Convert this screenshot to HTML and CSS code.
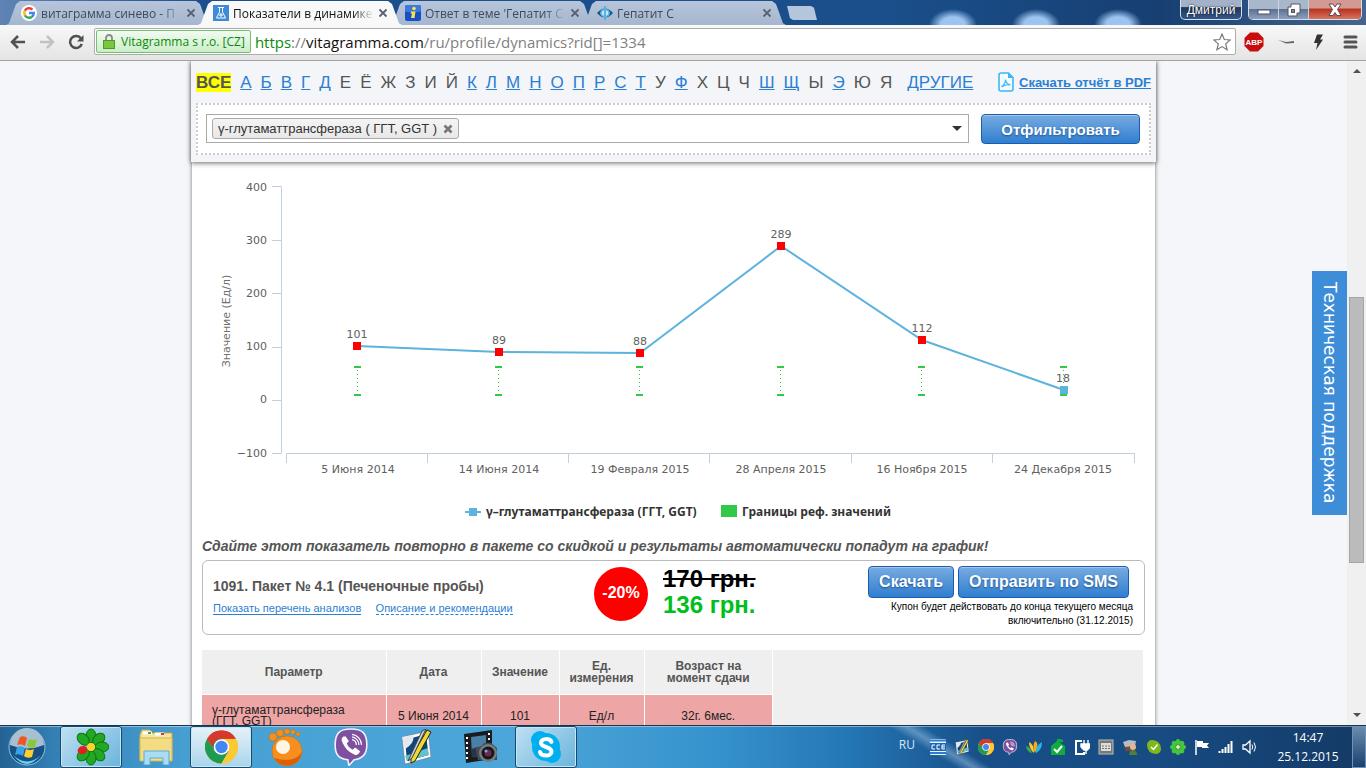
FILE: index.html
```html
<!DOCTYPE html>
<html lang="ru">
<head>
    <meta charset="UTF-8">
    <meta name="viewport" content="width=device-width, initial-scale=1.0">
    <title>Показатели в динамике</title>
    <link rel="stylesheet" href="styles.css">
</head>
<body>
    <svg class="sprite" width="0" height="0" aria-hidden="true">
        <symbol id="chrome" viewBox="0 0 32 32">
            <circle cx="16" cy="16" r="16" fill="#fcc934"/>
            <path d="M16 16 L2.1 8 A16 16 0 0 1 29.9 8 L16 8 Z" fill="#d7382d"/>
            <path d="M2.1 8 A16 16 0 0 0 16 32 L23 20 L9 20 Z" fill="#1e9b50"/>
            <path d="M29.9 8 A16 16 0 0 1 16 32 L23 20 L22 8 Z" fill="#fcc934"/>
            <path d="M2.1 8 L9 20 L16 8 Z" fill="#1e9b50"/>
            <path d="M2.1 8 A16 16 0 0 1 29.9 8 L16 8 A8 8 0 0 0 9 12 L7 16 Z" fill="#d7382d"/>
            <circle cx="16" cy="16" r="7.5" fill="#fff"/>
            <circle cx="16" cy="16" r="6" fill="#4285f4"/>
        </symbol>
        <symbol id="viber" viewBox="0 0 32 36">
            <path d="M16 1 C27 1 31 5 31 16 C31 25 27 29 19 30 L14 35.500 L13 30 C4 29 1 25 1 16 C1 5 5 1 16 1 Z" fill="#7d51a0" stroke="#f4effa" stroke-width="1.500"/>
            <path d="M9 8 C7 9 6.500 11 8 14 C11 20 14 23 20 25.500 C22 26 24 24 24.500 22 L20 18.500 L17.500 20.500 C14.500 19 13 17.500 12 14.500 L14 12.500 L11 8 Z" fill="#fff"/>
            <path d="M17 11 A5 5 0 0 1 21 16 M17 8.500 A8 8 0 0 1 23.500 16 M17 6 A10.500 10.500 0 0 1 26 16" fill="none" stroke="#fff" stroke-width="1.200"/>
        </symbol>
        <symbol id="pen" viewBox="0 0 32 36">
            <path d="M2 8 L28 2 L31 28 L5 35 Z" fill="#fff" stroke="#667" stroke-width=".5"/>
            <path d="M5 11 L26 5 L28.500 26 L7 32 Z" fill="#10447f"/>
            <path d="M5 27 L28 19 L28.500 26 L7 32 Z" fill="#62c3c8"/>
            <path d="M2 8 L13 6 C15 12 10 17 5 20 Z" fill="#e3e8ec"/>
            <path d="M27 1 L31 3 L15 32 L11 34 L11 29 Z" fill="#f0d92c" stroke="#222"/>
            <path d="M22 2 L26 0 L12 29 L8 32 Z" fill="#c5cdd5" stroke="#444"/>
        </symbol>
        <symbol id="close" viewBox="0 0 10 10">
            <path d="M1.500 1.500 L8.500 8.500 M8.500 1.500 L1.500 8.500" stroke="currentColor" stroke-width="1.800"/>
        </symbol>
    </svg>

    <header class="tabstrip">
        <nav class="tabs">
            <a class="tab" href="#">
                <svg class="tab-icon" viewBox="0 0 16 16"><circle cx="8" cy="8" r="8" fill="#fff"/><g fill="none" stroke-width="2.400"><path d="M11.500 4.700 A4.800 4.800 0 0 0 3.800 5.800" stroke="#ea4335"/><path d="M3.800 5.800 A4.800 4.800 0 0 0 3.900 10.400" stroke="#fbbc05"/><path d="M3.900 10.400 A4.800 4.800 0 0 0 11 11.700" stroke="#34a853"/><path d="M11 11.700 A4.800 4.800 0 0 0 12.800 8 L8 8" stroke="#4285f4"/></g></svg>
                <span class="tab-title">витаграмма синево - П</span>
                <svg class="tab-close"><use href="#close"/></svg>
            </a>
            <a class="tab active" href="#">
                <svg class="tab-icon" viewBox="0 0 16 16"><rect width="16" height="16" fill="#3d8ad6"/><path d="M5 2.500 H11 M6.500 3 V7 L3.500 13 H12.500 L9.500 7 V3" fill="none" stroke="#fff"/><path d="M8 8 V12 M6 10 H10" stroke="#fff"/></svg>
                <span class="tab-title">Показатели в динамике</span>
                <svg class="tab-close"><use href="#close"/></svg>
            </a>
            <a class="tab" href="#">
                <svg class="tab-icon" viewBox="0 0 16 16"><rect width="16" height="16" rx="2" fill="#1650c4"/><rect width="16" height="7" rx="2" fill="#3b79dd"/><circle cx="9" cy="3.500" r="1.800" fill="#ffe14a"/><path d="M6 6.500 H10.500 L9.500 13 H6 L7 8.500 H5.500 Z" fill="#ffe14a"/></svg>
                <span class="tab-title">Ответ в теме 'Гепатит С</span>
                <svg class="tab-close"><use href="#close"/></svg>
            </a>
            <a class="tab" href="#">
                <svg class="tab-icon" viewBox="0 0 16 16"><path d="M0 8 Q8 -1 16 8 Q8 17 0 8 Z" fill="#1b5688"/><ellipse cx="8" cy="8" rx="4.500" ry="3.500" fill="#cfe6f5"/><path d="M8 1 V15" stroke="#54b4ea" stroke-width="2"/><ellipse cx="8" cy="8" rx="4" ry="3.500" fill="none" stroke="#54b4ea" stroke-width="1.500"/></svg>
                <span class="tab-title">Гепатит С</span>
                <svg class="tab-close"><use href="#close"/></svg>
            </a>
            <button class="new-tab" aria-label="Новая вкладка"></button>
        </nav>
        <div class="window-tools">
            <button class="user">Дмитрий</button>
            <div class="window-buttons">
                <button class="min" aria-label="Свернуть"><svg width="14" height="14" viewBox="0 0 14 14"><rect x="1" y="7" width="12" height="4" fill="#fff" stroke="#556"/></svg></button>
                <button class="restore" aria-label="Восстановить"><svg width="14" height="14" viewBox="0 0 14 14"><path d="M4 1 H13 V10 H10 V13 H1 V4 H4 Z" fill="#fff" stroke="#556"/><rect x="4.500" y="6.500" width="3" height="3" fill="#7189aa" stroke="#556"/></svg></button>
                <button class="quit" aria-label="Закрыть"><svg width="14" height="14" viewBox="0 0 14 14"><path d="M1 1 H5 L7 4 L9 1 H13 L9.500 6.500 L13 12.500 H9 L7 9.500 L5 12.500 H1 L4.500 6.500 Z" fill="#fff" stroke="#6a4650"/></svg></button>
            </div>
        </div>
    </header>

    <div class="toolbar">
        <button class="tool" aria-label="Назад"><svg width="16" height="14" viewBox="0 0 16 14"><path d="M15 7 H2 M8 1 L2 7 L8 13" fill="none" stroke="#505050" stroke-width="2.500"/></svg></button>
        <button class="tool" aria-label="Вперёд"><svg width="16" height="14" viewBox="0 0 16 14"><path d="M1 7 H14 M8 1 L14 7 L8 13" fill="none" stroke="#c2c2c2" stroke-width="2.500"/></svg></button>
        <button class="tool" aria-label="Обновить"><svg width="16" height="16" viewBox="0 0 16 16"><path d="M13 4.500 A6 6 0 1 0 13.800 10" fill="none" stroke="#505050" stroke-width="2.500"/><path d="M15.500 1 V7.500 H9 Z" fill="#505050"/></svg></button>
        <div class="omnibox">
            <span class="badge"><svg width="12" height="15" viewBox="0 0 12 15"><path d="M3 7 V4 A3 3 0 0 1 9 4 V7" fill="none" stroke="#8b8b8b" stroke-width="1.800"/><rect x=".5" y="6.500" width="11" height="8" fill="#7cc63f" stroke="#4c9e1d"/></svg>Vitagramma s r.o. [CZ]</span>
            <a class="url" href="#"><span class="scheme">https</span>://<span class="host">vitagramma.com</span>/ru/profile/dynamics?rid[]=1334</a>
            <svg width="18" height="18" viewBox="0 0 18 18"><path d="M9 1 L11.300 6.500 L17.200 7 L12.700 10.900 L14.100 16.700 L9 13.600 L3.900 16.700 L5.300 10.900 L.8 7 L6.700 6.500 Z" fill="#fff" stroke="#777" stroke-width="1.200"/></svg>
        </div>
        <div class="extensions">
            <svg width="20" height="20" viewBox="0 0 20 20"><path d="M6 .5 H14 L19.500 6 V14 L14 19.500 H6 L.5 14 V6 Z" fill="#c70d0d"/><text class="abp" x="10" y="13" text-anchor="middle">ABP</text></svg>
            <svg width="20" height="20" viewBox="0 0 20 20"><path d="M2 8 L10 10 L18 9 L18 11 L10 11.500 Z" fill="#666"/></svg>
            <svg width="20" height="20" viewBox="0 0 20 20"><path d="M9 2.500 L15 2.500 L12 7.500 L15 7.500 L8 18 L9.500 11 L6 11 Z" fill="#333"/></svg>
            <svg width="20" height="20" viewBox="0 0 20 20"><path d="M5 5 H16 M5 10 H16 M5 15 H16" stroke="#555" stroke-width="3" stroke-linecap="round"/></svg>
        </div>
    </div>

    <div class="viewport">
        <main class="page">
            <div class="column">
                <form class="filter">
                    <div class="filter-top">
                        <nav class="letters">
                            <b class="all">ВСЕ</b>
                            <a href="#">А</a><a href="#">Б</a><a href="#">В</a><a href="#">Г</a><a href="#">Д</a>
                            <span>Е</span><span>Ё</span><span>Ж</span><span>З</span><span>И</span><span>Й</span>
                            <a href="#">К</a><a href="#">Л</a><a href="#">М</a><a href="#">Н</a><a href="#">О</a><a href="#">П</a><a href="#">Р</a><a href="#">С</a><a href="#">Т</a>
                            <span>У</span><a href="#">Ф</a><span>Х</span><span>Ц</span><span>Ч</span>
                            <a href="#">Ш</a><a href="#">Щ</a><span>Ы</span><a href="#">Э</a><span>Ю</span><span>Я</span>
                            <a class="other" href="#">ДРУГИЕ</a>
                        </nav>
                        <div class="pdf">
                            <svg width="16" height="20" viewBox="0 0 16 20"><path d="M3 1 H10.500 L15 5.500 V17 Q15 19 13 19 H3 Q1 19 1 17 V3 Q1 1 3 1 Z" fill="#f2fbff" stroke="#3db7f5" stroke-width="1.600"/><path d="M10 1 V6 H15 Z" fill="#3db7f5"/><path d="M7.500 7.500 Q8 12 12.500 13 Q8 12 3.500 15 Q7.500 12 7.500 7.500" fill="none" stroke="#3db7f5" stroke-width="1.200"/></svg>
                            <a href="#">Скачать отчёт в PDF</a>
                        </div>
                    </div>
                    <div class="filter-box">
                        <div class="select">
                            <span class="tag">γ-глутаматтрансфераза ( ГГТ, GGT )
                                <button type="button" aria-label="Удалить"><svg width="10" height="10" viewBox="0 0 10 10"><path d="M1.500 1.500 L8.500 8.500 M8.500 1.500 L1.500 8.500" stroke="#777" stroke-width="2.600"/></svg></button>
                            </span>
                            <input type="text" aria-label="Показатель">
                            <button type="button" class="arrow" aria-label="Открыть список"></button>
                        </div>
                        <button type="button" class="btn btn-filter">Отфильтровать</button>
                    </div>
                </form>

                <div class="content">
                    <svg class="chart" viewBox="0 0 943 368" role="img" aria-label="График показателя">
                        <path class="axis" d="M70 24.500 H79.500 V291.500 H70 M70 78.500 H79 M70 131.500 H79 M70 185.500 H79 M70 238.500 H79"/>
                        <path class="axis" d="M84.500 301 V291.500 H932.500 V301 M225.500 291 V301 M366.500 291 V301 M507.500 291 V301 M649.500 291 V301 M790.500 291 V301"/>
                        <g class="label end">
                            <text x="65" y="29">400</text>
                            <text x="65" y="82">300</text>
                            <text x="65" y="135">200</text>
                            <text x="65" y="188">100</text>
                            <text x="65" y="241">0</text>
                            <text x="65" y="295">−100</text>
                        </g>
                        <text class="axis-title" transform="translate(28 159) rotate(-90)">Значение (Ед/л)</text>
                        <g class="label middle">
                            <text x="156" y="311">5 Июня 2014</text>
                            <text x="297" y="311">14 Июня 2014</text>
                            <text x="438" y="311">19 Февраля 2015</text>
                            <text x="579" y="311">28 Апреля 2015</text>
                            <text x="720" y="311">16 Ноября 2015</text>
                            <text x="861" y="311">24 Декабря 2015</text>
                        </g>
                        <g class="range">
                            <path d="M152 205 H159 M152 233 H159 M293 205 H300 M293 233 H300 M434 205 H441 M434 233 H441 M575 205 H582 M575 233 H582 M716 205 H723 M716 233 H723 M858 205 H865 M858 233 H865"/>
                            <path class="dots" d="M155.500 208 V232 M296.500 208 V232 M437.500 208 V232 M578.500 208 V232 M719.500 208 V232 M861.500 208 V232"/>
                        </g>
                        <polyline class="line" points="155,184 297,190 438,191 579,84 720,178 862,228"/>
                        <g fill="#f00">
                            <rect x="151" y="180" width="8" height="8"/>
                            <rect x="293" y="186" width="8" height="8"/>
                            <rect x="434" y="187" width="8" height="8"/>
                            <rect x="575" y="80" width="8" height="8"/>
                            <rect x="716" y="174" width="8" height="8"/>
                        </g>
                        <rect x="858" y="224" width="8" height="8" fill="#5cb3db"/>
                        <g class="label middle">
                            <text x="155" y="176">101</text>
                            <text x="297" y="182">89</text>
                            <text x="438" y="183">88</text>
                            <text x="579" y="76">289</text>
                            <text x="720" y="170">112</text>
                            <text x="861" y="220">18</text>
                        </g>
                        <path class="line" d="M263 350 H279"/>
                        <rect x="267" y="346" width="8" height="8" fill="#5cb3db"/>
                        <text class="legend" x="284" y="354">γ–глутаматтрансфераза (ГГТ, GGT)</text>
                        <rect x="519" y="343" width="16" height="12" fill="#32c84a"/>
                        <text class="legend" x="540" y="354">Границы реф. значений</text>
                    </svg>

                    <h2>Сдайте этот показатель повторно в пакете со скидкой и результаты автоматически попадут на график!</h2>

                    <section class="promo">
                        <div class="promo-info">
                            <h3>1091. Пакет № 4.1 (Печеночные пробы)</h3>
                            <a href="#">Показать перечень анализов</a>
                            <a class="dashed" href="#">Описание и рекомендации</a>
                        </div>
                        <div class="discount">-20%</div>
                        <div class="prices">
                            <del>170 грн.</del>
                            <strong>136 грн.</strong>
                        </div>
                        <div class="promo-actions">
                            <div class="promo-buttons">
                                <button class="btn">Скачать</button>
                                <button class="btn">Отправить по SMS</button>
                            </div>
                            <p>Купон будет действовать до конца текущего месяца<br>включительно (31.12.2015)</p>
                        </div>
                    </section>

                    <div class="table-wrap">
                        <table>
                            <thead>
                                <tr>
                                    <th class="col-name">Параметр</th>
                                    <th class="col-date">Дата</th>
                                    <th class="col-value">Значение</th>
                                    <th class="col-unit">Ед. измерения</th>
                                    <th class="col-age">Возраст на момент сдачи</th>
                                </tr>
                            </thead>
                            <tbody>
                                <tr>
                                    <td class="name">γ-глутаматтрансфераза (ГГТ, GGT)</td>
                                    <td>5 Июня 2014</td>
                                    <td>101</td>
                                    <td>Ед/л</td>
                                    <td>32г. 6мес.</td>
                                </tr>
                            </tbody>
                        </table>
                    </div>
                </div>
            </div>
            <a class="support" href="#">Техническая поддержка</a>
        </main>
        <div class="scrollbar">
            <span class="up"></span>
            <span class="thumb"></span>
            <span class="down"></span>
        </div>
    </div>

    <footer class="taskbar">
        <button class="start" aria-label="Пуск">
            <svg width="38" height="38" viewBox="0 0 38 38">
                <circle cx="19" cy="19" r="18" fill="#175083" stroke="#8fc3e3"/>
                <path d="M2 17 A17 17 0 0 1 36 17 Q19 24 2 17 Z" fill="#a8bfd0"/>
                <path d="M5 27 Q19 40 33 27 Q25 36 19 36 Q12 36 5 27" fill="#63d5f2"/>
                <path d="M12 9 Q16 7 19 10 L17 18 Q13 15 9 17 Z" fill="#ee5522"/>
                <path d="M21 11 Q25 13 29 11 L27 19 Q22 21 19 18 Z" fill="#8cc63c"/>
                <path d="M9 19 Q13 17 17 20 L15 28 Q11 25 7 27 Z" fill="#3aa0e8"/>
                <path d="M18 21 Q22 23 26 21 L24 29 Q19 31 16 28 Z" fill="#ffce2e"/>
            </svg>
        </button>
        <div class="apps">
            <button class="app open" aria-label="ICQ"><svg width="36" height="38" viewBox="-18 -19 36 38"><g fill="#22a822" stroke="#0d7310"><ellipse cy="-11" rx="5" ry="7"/><ellipse cy="-11" rx="5" ry="7" transform="rotate(45)"/><ellipse cy="-11" rx="5" ry="7" transform="rotate(90)"/><ellipse cy="-11" rx="5" ry="7" transform="rotate(135)"/><ellipse cy="-11" rx="5" ry="7" transform="rotate(180)"/><ellipse cy="-11" rx="5" ry="7" transform="rotate(225)"/><ellipse cy="-11" rx="5" ry="7" transform="rotate(315)"/></g><ellipse cy="-9" rx="4" ry="5" transform="rotate(250)" fill="#e02020"/><circle r="4" fill="#ffd42a"/></svg></button>
            <button class="app" aria-label="Проводник"><svg width="36" height="36" viewBox="0 0 36 36"><path d="M2 6 L4 1 H12 L14 4 H34 V30 H2 Z" fill="#f6e59a" stroke="#c9a945"/><path d="M5 4 H14 M17 5 H26" stroke="#fff" stroke-width="3"/><path d="M10 4 H13" stroke="#3fa34d" stroke-width="2"/><path d="M23 5 H26" stroke="#d33" stroke-width="2"/><path d="M2 9 H34 V32 H2 Z" fill="#f3dc84" stroke="#d3b75b"/><path d="M6 22 H31 V36 H25 V29 H12 V36 H6 Z" fill="#a9dcf5" stroke="#5fa9d3"/></svg></button>
            <button class="app open chrome" aria-label="Chrome"><svg width="33" height="36"><use href="#chrome"/></svg></button>
            <button class="app" aria-label="GOM Player"><svg width="36" height="38" viewBox="0 0 36 38"><g fill="#f78f1e" stroke="#c96800" stroke-width=".5"><circle cx="5" cy="9" r="4"/><circle cx="12" cy="5" r="3.500"/><circle cx="19" cy="3.500" r="2.800"/><circle cx="25" cy="4" r="2.300"/><circle cx="30" cy="6" r="2"/><circle cx="19" cy="23" r="15"/></g><path d="M6 30 A15 15 0 0 0 34 24 Q26 36 6 30" fill="#db5f05"/><circle cx="15" cy="19" r="7" fill="#fff5e4"/></svg></button>
            <button class="app" aria-label="Viber"><svg width="34" height="38"><use href="#viber"/></svg></button>
            <button class="app" aria-label="Редактор"><svg width="34" height="36"><use href="#pen"/></svg></button>
            <button class="app" aria-label="Медиа"><svg width="36" height="36" viewBox="0 0 36 36"><path d="M1 5 L29 1 V30 L3 34 Z" fill="#1a1c20"/><path d="M8 8 L23 6 V26 L9 28 Z" fill="#4a7fa8"/><path d="M8 20 L23 16 V26 L9 28 Z" fill="#253547"/><path d="M4 8 V32 M26 4 V14" stroke="#fff" stroke-width="2" stroke-dasharray="2 3"/><path d="M12 18 H18 L21 14 H28 L34 19 V31 H15 Z" fill="#444a50"/><circle cx="25" cy="24" r="9" fill="#777d84"/><circle cx="25" cy="24" r="6.500" fill="#15171a"/><circle cx="25" cy="24" r="3.500" fill="#6c2a52"/><circle cx="23" cy="22" r="1.500" fill="#7fa8d8"/></svg></button>
            <button class="app open" aria-label="Skype"><svg width="34" height="36" viewBox="0 0 34 36"><circle cx="17" cy="18" r="14" fill="#00aff0"/><circle cx="11" cy="11" r="9" fill="#00aff0"/><circle cx="23" cy="25" r="9" fill="#00aff0"/><path d="M22.500 13 C21 9 12 9 12 14 C12 19 22.500 17 22.500 22.500 C22.500 28 12 27.500 11 23" fill="none" stroke="#fff" stroke-width="4" stroke-linecap="round"/></svg></button>
        </div>
        <div class="tray">
            <span class="lang">RU</span>
            <div class="tray-icons">
                <svg viewBox="0 0 16 16"><rect width="16" height="16" rx="1" fill="#e8f4fd"/><path d="M0 1.500 H16 M0 14 H16" stroke="#2c7cc9" stroke-width="2"/><rect y="4" width="16" height="8" fill="#1c66b4"/><path d="M5 6 H2 V10 H5 M10 6 H7 V10 H10 M15 6 H12 V10 H15 M12 8 H15" fill="none" stroke="#fff"/></svg>
                <svg><use href="#pen"/></svg>
                <svg><use href="#chrome"/></svg>
                <svg><use href="#viber"/></svg>
                <svg viewBox="0 0 16 16"><path d="M0 7 Q4 8 6 14 Q1 13 0 7" fill="#3fae49"/><path d="M3 3 Q8 5 8 14 Q3 10 3 3" fill="#ffc928"/><path d="M9 2 Q14 4 9 14 Q6 7 9 2" fill="#f7a81b"/><path d="M16 3 Q16 11 10 14 Q9 7 16 3" fill="#27b6e6"/></svg>
                <svg viewBox="0 0 16 16"><path d="M1 7 L7 2 V0 H10 L13 1 V3 H9 L15 7 V16 H1 Z" fill="#0fae3c"/><path d="M4 10 L7 13 L12 7" fill="none" stroke="#fff" stroke-width="2"/></svg>
                <svg viewBox="0 0 16 16"><path d="M8 2 H2 V15 H10 V13" fill="none" stroke="#fff" stroke-width="2"/><path d="M10 1 V5 M14 1 V5 M7 5 H16 V8 L13.500 11 H10 L7 8 Z M12 10 V15" stroke="#fff" stroke-width="1.400" fill="#fff"/></svg>
                <svg viewBox="0 0 16 16"><rect x="1" y="1" width="14" height="14" fill="#777" stroke="#bbb"/><rect x="3" y="4" width="10" height="8" fill="#ddd"/><path d="M4 7 H12 M4 9.500 H12" stroke="#777" stroke-dasharray="2 1"/></svg>
                <svg viewBox="0 0 16 16"><path d="M1 3 L7 1 L14 2 L13 7 L3 8 Z" fill="#b9bcc0"/><path d="M2 8 H9 V12 H4 Z" fill="#7c4938"/><circle cx="11" cy="8" r="3" fill="#e7b78c"/><path d="M7 16 Q8 11 11 11 Q15 11 15 16 Z" fill="#2f8f3a"/><path d="M11 11 V16" stroke="#e33"/></svg>
                <svg viewBox="0 0 16 16"><circle cx="6" cy="6" r="5" fill="#7fb81c"/><circle cx="10" cy="10" r="5" fill="#7fb81c"/><circle cx="8" cy="8" r="6.500" fill="#7fb81c"/><path d="M5 8 L7.500 10.500 L11.500 5.500" fill="none" stroke="#fff" stroke-width="1.500"/></svg>
                <svg viewBox="-8 -8 16 16"><g fill="#43c53f"><ellipse cy="-5" rx="2.300" ry="3"/><ellipse cy="5" rx="2.300" ry="3"/><ellipse cx="-5" rx="3" ry="2.300"/><ellipse cx="5" rx="3" ry="2.300"/><circle cx="-3.700" cy="-3.700" r="2.600"/><circle cx="3.700" cy="-3.700" r="2.600"/><circle cx="-3.700" cy="3.700" r="2.600"/><circle cx="3.700" cy="3.700" r="2.600"/></g><circle r="2" fill="#f4ef8b"/></svg>
                <svg viewBox="0 0 16 16"><path d="M2 1 V16" stroke="#fff" stroke-width="1.500"/><path d="M3 2 H9 V4 H15 L13 6.500 L15 9 H8 V8 H3 Z" fill="#fff"/></svg>
                <svg viewBox="0 0 16 16"><path d="M1.500 12 V14 M4.500 10 V14 M7.500 8 V14 M10.500 5 V14 M13.500 2 V14" stroke="#fff" stroke-width="2"/></svg>
                <svg viewBox="0 0 16 16"><path d="M1 6 H3.500 L8 2 V14 L3.500 10 H1 Z" fill="none" stroke="#fff" stroke-width="1.300"/><path d="M10 5.500 Q11.500 8 10 10.500 M12 3.500 Q15 8 12 12.500" fill="none" stroke="#fff"/></svg>
            </div>
            <div class="clock">14:47<br>25.12.2015</div>
            <button class="show-desktop" aria-label="Показать рабочий стол"></button>
        </div>
    </footer>
</body>
</html>
```
FILE: styles.css
```css
* {
    box-sizing: border-box;
}
body {
    margin: 0;
    height: 100vh;
    display: flex;
    flex-direction: column;
    overflow: hidden;
    font-family: "Liberation Sans", Arial, sans-serif;
    font-size: 12px;
    color: #555;
}
button {
    font: inherit;
    padding: 0;
    border: none;
    background: none;
    cursor: pointer;
}
svg {
    flex: none;
    display: block;
}
.sprite {
    position: absolute;
}
a {
    color: #2b7fd3;
}
h2, h3, p {
    margin: 0;
}

/* Browser window */
.tabstrip {
    flex: none;
    height: 25px;
    display: flex;
    justify-content: space-between;
    background:
        radial-gradient(ellipse 24px 16px at 953px 25px, #9cc4f0 50%, transparent),
        radial-gradient(ellipse 24px 16px at 1036px 25px, #9cc4f0 50%, transparent),
        radial-gradient(ellipse 24px 16px at 1118px 25px, #9cc4f0 50%, transparent),
        linear-gradient(90deg, #5f83b4, #1b4f8c 15%, #1a4f8b 65%, #173f72 85%, #46648d);
}
.tabs {
    display: flex;
    padding-left: 6px;
}
.tab {
    position: relative;
    z-index: 1;
    width: 204px;
    height: 24px;
    margin: 1px -12px 0 0;
    padding: 0 14px 0 15px;
    display: flex;
    align-items: center;
    gap: 4px;
    color: #3f4a5c;
    text-decoration: none;
    font-family: "Open Sans", "Noto Sans", sans-serif;
    font-size: 12px;
}
.tab::before {
    content: "";
    position: absolute;
    inset: 0;
    z-index: -1;
    background: linear-gradient(#b6c5da, #a5b7cf);
    clip-path: polygon(0 100%, 3px 93%, 10px 12%, 14px 0, 190px 0, 194px 12%, 201px 93%, 100% 100%);
}
.tab.active {
    z-index: 2;
    color: #111;
}
.tab.active::before {
    background: #f8f8f8;
}
.tab-icon {
    width: 16px;
    height: 16px;
}
.tab-title {
    flex: 1;
    overflow: hidden;
    white-space: nowrap;
    -webkit-mask-image: linear-gradient(90deg, #000 85%, transparent);
    mask-image: linear-gradient(90deg, #000 85%, transparent);
}
.tab-close {
    width: 10px;
    height: 10px;
    color: #5a6270;
}
.new-tab {
    width: 30px;
    height: 14px;
    margin: 6px 0 0 13px;
    background: #b4c6dc;
    clip-path: polygon(0 0, 80% 0, 90% 12%, 100% 100%, 20% 100%, 10% 88%);
}
.window-tools {
    display: flex;
    gap: 6px;
    padding-right: 4px;
}
.user {
    width: 62px;
    height: 20px;
    border: 1px solid #d5dfec;
    border-top: none;
    border-radius: 0 0 5px 5px;
    background: linear-gradient(#a3b2c8 35%, #1d375c 40%, #35588a);
    color: #fff;
    font-size: 12px;
    text-shadow: 0 0 2px #000;
}
.window-buttons {
    display: flex;
    height: 20px;
    border: 1px solid #d5dfec;
    border-top: none;
    border-radius: 0 0 5px 5px;
    overflow: hidden;
}
.window-buttons button {
    width: 30px;
    display: flex;
    justify-content: center;
    align-items: center;
    background: linear-gradient(#a9b7ca 45%, #5b7394 50%, #8ba0bd);
    border-right: 1px solid #c8d3e2;
}
.window-buttons .quit {
    width: 52px;
    border-right: none;
    background: linear-gradient(#d29a92 40%, #b93620 50%, #d6755c);
}
.toolbar {
    flex: none;
    height: 36px;
    display: flex;
    align-items: center;
    padding: 0 6px 2px 3px;
    background: linear-gradient(#f8f8f8, #e4e4e4);
    border-bottom: 1px solid #a3a3a3;
}
.tool {
    width: 29px;
    height: 28px;
    display: flex;
    align-items: center;
    justify-content: center;
}
.omnibox {
    flex: 1;
    height: 27px;
    margin: 0 8px 0 4px;
    padding: 0 4px 0 1px;
    display: flex;
    align-items: center;
    background: #fff;
    border: 1px solid #adadad;
    border-radius: 2px;
    font-family: "Open Sans", "Noto Sans", sans-serif;
}
.badge {
    height: 23px;
    padding: 0 5px 0 6px;
    display: flex;
    align-items: center;
    gap: 6px;
    border: 1px solid #74bf74;
    border-radius: 2px;
    background: linear-gradient(#f1fbf1, #ccedc9);
    color: #0a8a0a;
    font-size: 12px;
}
.url {
    flex: 1;
    margin-left: 4px;
    color: #808080;
    font-size: 15px;
    text-decoration: none;
}
.scheme {
    color: #0a8a0a;
}
.host {
    color: #111;
}
.extensions {
    display: flex;
    gap: 12px;
}
.abp {
    font: bold 8px "Liberation Sans", sans-serif;
    fill: #fff;
}

/* Page */
.viewport {
    flex: 1;
    min-height: 0;
    display: flex;
}
.page {
    position: relative;
    flex: 1;
    overflow: hidden;
    background: #f4f6f9;
}
.column {
    max-width: 963px;
    min-height: 100%;
    margin: 0 auto;
    background: #fff;
    box-shadow: 0 0 4px rgba(0, 0, 0, 0.55);
}
.filter {
    position: relative;
    margin: 0 -1px;
    padding: 0 5px 7px;
    background: #f4f5f8;
    box-shadow: 0 1px 5px rgba(0, 0, 0, 0.6);
}
.filter-top {
    height: 42px;
    display: flex;
    align-items: center;
    justify-content: space-between;
}
.letters {
    display: flex;
    gap: 9px;
    font-size: 17px;
    line-height: 19px;
}
.all {
    background: #ff0;
}
.other {
    margin-left: 6px;
}
.pdf {
    display: flex;
    align-items: center;
    gap: 5px;
    font-size: 13px;
    font-weight: bold;
}
.filter-box {
    display: flex;
    gap: 12px;
    padding: 9px 9px 9px 8px;
    border: 2px dotted #ccc;
    background: #fff;
}
.select {
    flex: 1;
    height: 29px;
    display: flex;
    align-items: center;
    padding: 0 6px 0 5px;
    border: 1px solid #aaa;
}
.tag {
    height: 21px;
    padding: 0 5px;
    display: flex;
    align-items: center;
    gap: 6px;
    border: 1px solid #aaa;
    border-radius: 3px;
    background: linear-gradient(#f4f4f4, #e8e8e8);
    color: #333;
    font-size: 13px;
}
.select input {
    flex: 1;
    min-width: 0;
    border: none;
    outline: none;
    background: none;
}
.arrow {
    border: 5px solid transparent;
    border-top-color: #333;
    border-bottom: none;
}
.btn {
    height: 32px;
    padding: 0 10px;
    border: 1px solid #1c5cb0;
    border-radius: 4px;
    background: linear-gradient(#78abe0, #2f7fd0);
    box-shadow: inset 0 1px 0 rgba(255, 255, 255, 0.35);
    color: #fff;
    font-size: 16px;
    font-weight: bold;
    text-shadow: 0 1px 2px #1c4f90;
}
.btn-filter {
    width: 159px;
    height: 30px;
    font-size: 15px;
}
.content {
    padding: 0 10px;
}

/* Chart */
.chart {
    width: 100%;
    height: auto;
    font-family: "DejaVu Sans", sans-serif;
}
.axis {
    fill: none;
    stroke: #c0d0e0;
}
.label {
    font-size: 11px;
    fill: #606060;
}
.end {
    text-anchor: end;
}
.middle {
    text-anchor: middle;
}
.axis-title {
    font-size: 11px;
    fill: #707070;
    text-anchor: middle;
}
.line {
    fill: none;
    stroke: #5cb3db;
    stroke-width: 2px;
}
.range path {
    stroke: #32c84a;
    stroke-width: 2px;
}
.range .dots {
    stroke-width: 1px;
    stroke-dasharray: 1 3;
}
.legend {
    font-family: "Noto Sans", sans-serif;
    font-size: 12px;
    font-weight: bold;
    fill: #333;
}

/* Promo */
h2 {
    margin: 6px 0 4px;
    font-size: 14px;
    line-height: 20px;
    font-style: italic;
    white-space: nowrap;
}
.promo {
    display: grid;
    grid-template-columns: 381px 54px 1fr auto;
    padding: 5px 11px 6px 10px;
    border: 1px solid #bbb;
    border-radius: 6px;
}
.promo-info {
    padding-top: 10px;
}
h3 {
    margin-bottom: 5px;
    font-size: 14px;
    line-height: 20px;
}
.promo-info a {
    margin-right: 11px;
    font-size: 11px;
    text-decoration: none;
    border-bottom: 1px solid #2b7fd3;
}
.promo-info a.dashed {
    border-bottom-style: dashed;
}
.discount {
    height: 54px;
    margin-top: 1px;
    border-radius: 50%;
    background: #f00;
    color: #fff;
    font-size: 16px;
    font-weight: bold;
    line-height: 52px;
    text-align: center;
}
.prices {
    display: flex;
    flex-direction: column;
    padding-left: 15px;
    font-size: 24px;
    font-weight: bold;
    line-height: 26px;
    color: #000;
}
.prices strong {
    color: #00bf1c;
}
.promo-actions {
    text-align: right;
    color: #000;
    font-size: 10px;
    line-height: 14px;
}
.promo-buttons {
    display: flex;
    justify-content: flex-end;
    gap: 4px;
    padding-right: 4px;
    margin-bottom: 2px;
}

/* Results */
.table-wrap {
    margin: 15px 2px 0 0;
    background: #efefef;
}
table {
    border-collapse: collapse;
    table-layout: fixed;
    width: 571px;
    font-size: 12px;
    line-height: 11px;
    text-align: center;
}
th, td {
    height: 44px;
    padding: 0 8px;
    border-right: 1px solid #fff;
    border-bottom: 1px solid #fff;
}
th {
    line-height: 12px;
}
td {
    padding: 0 4px;
    background: #eda5a5;
    color: #222;
}
td.name {
    padding: 0 20px 0 10px;
    text-align: left;
}
.col-name {
    width: 184px;
}
.col-date {
    width: 95px;
}
.col-value {
    width: 78px;
}
.col-unit {
    width: 85px;
}
.support {
    position: absolute;
    right: 0;
    top: 210px;
    width: 35px;
    height: 244px;
    display: flex;
    align-items: center;
    justify-content: center;
    writing-mode: vertical-rl;
    background: #3e8dd9;
    color: #fff;
    font-family: "DejaVu Sans", sans-serif;
    font-size: 17px;
    text-decoration: none;
}
.scrollbar {
    width: 19px;
    padding: 8px 2px;
    display: flex;
    flex-direction: column;
    align-items: center;
    background: #f0f0f0;
}
.up, .down {
    border: 4px solid transparent;
}
.up {
    border-top: none;
    border-bottom-color: #505050;
    margin-bottom: 224px;
}
.down {
    border-bottom: none;
    border-top-color: #505050;
    margin-top: auto;
}
.thumb {
    width: 15px;
    height: 266px;
    border: 1px solid #a5a5a5;
    background: #bbb;
}

/* Taskbar */
.taskbar {
    flex: none;
    height: 43px;
    display: flex;
    border-top: 1px solid #17354f;
    background:
        linear-gradient(31deg, transparent 40%, rgba(170, 205, 235, 0.45) 50%, transparent 60%) 885px 0 / 110px 100% no-repeat,
        linear-gradient(90deg, #246293, #3480b5 4%, #48a0d2 14%, #4ca6d9 38%, #3793cd 52%, #2477b5 62%, #184f88 72%, #174b82 85%, #143a66);
    box-shadow: inset 0 1px 0 rgba(255, 255, 255, 0.4);
}
.start {
    width: 60px;
    padding-right: 6px;
    display: flex;
    align-items: center;
    justify-content: center;
}
.apps {
    display: flex;
    gap: 3px;
}
.app {
    width: 62px;
    display: flex;
    align-items: center;
    justify-content: center;
    border: 1px solid transparent;
    border-radius: 3px;
}
.app.open {
    border-color: #17496f;
    background: linear-gradient(135deg, #bfe0f2, #6ab4dc);
    box-shadow: inset 0 0 0 1px #c8e6f6;
}
.app.chrome {
    background: linear-gradient(#e6f2f9, #a9d4ea);
}
.tray {
    margin-left: auto;
    display: flex;
    align-items: center;
    color: #fff;
    font-family: "Open Sans", "Noto Sans", sans-serif;
}
.lang {
    margin: 0 15px 6px 0;
    color: #d5e6f5;
    font-size: 12px;
}
.tray-icons {
    display: flex;
    gap: 8px;
}
.tray-icons svg {
    width: 16px;
    height: 16px;
}
.clock {
    width: 94px;
    padding-left: 6px;
    font-size: 12px;
    line-height: 19px;
    text-align: center;
}
.show-desktop {
    align-self: stretch;
    width: 14px;
    border: 1px solid #6f93b5;
    background: linear-gradient(#6a8bad, #1a4270);
}
```
